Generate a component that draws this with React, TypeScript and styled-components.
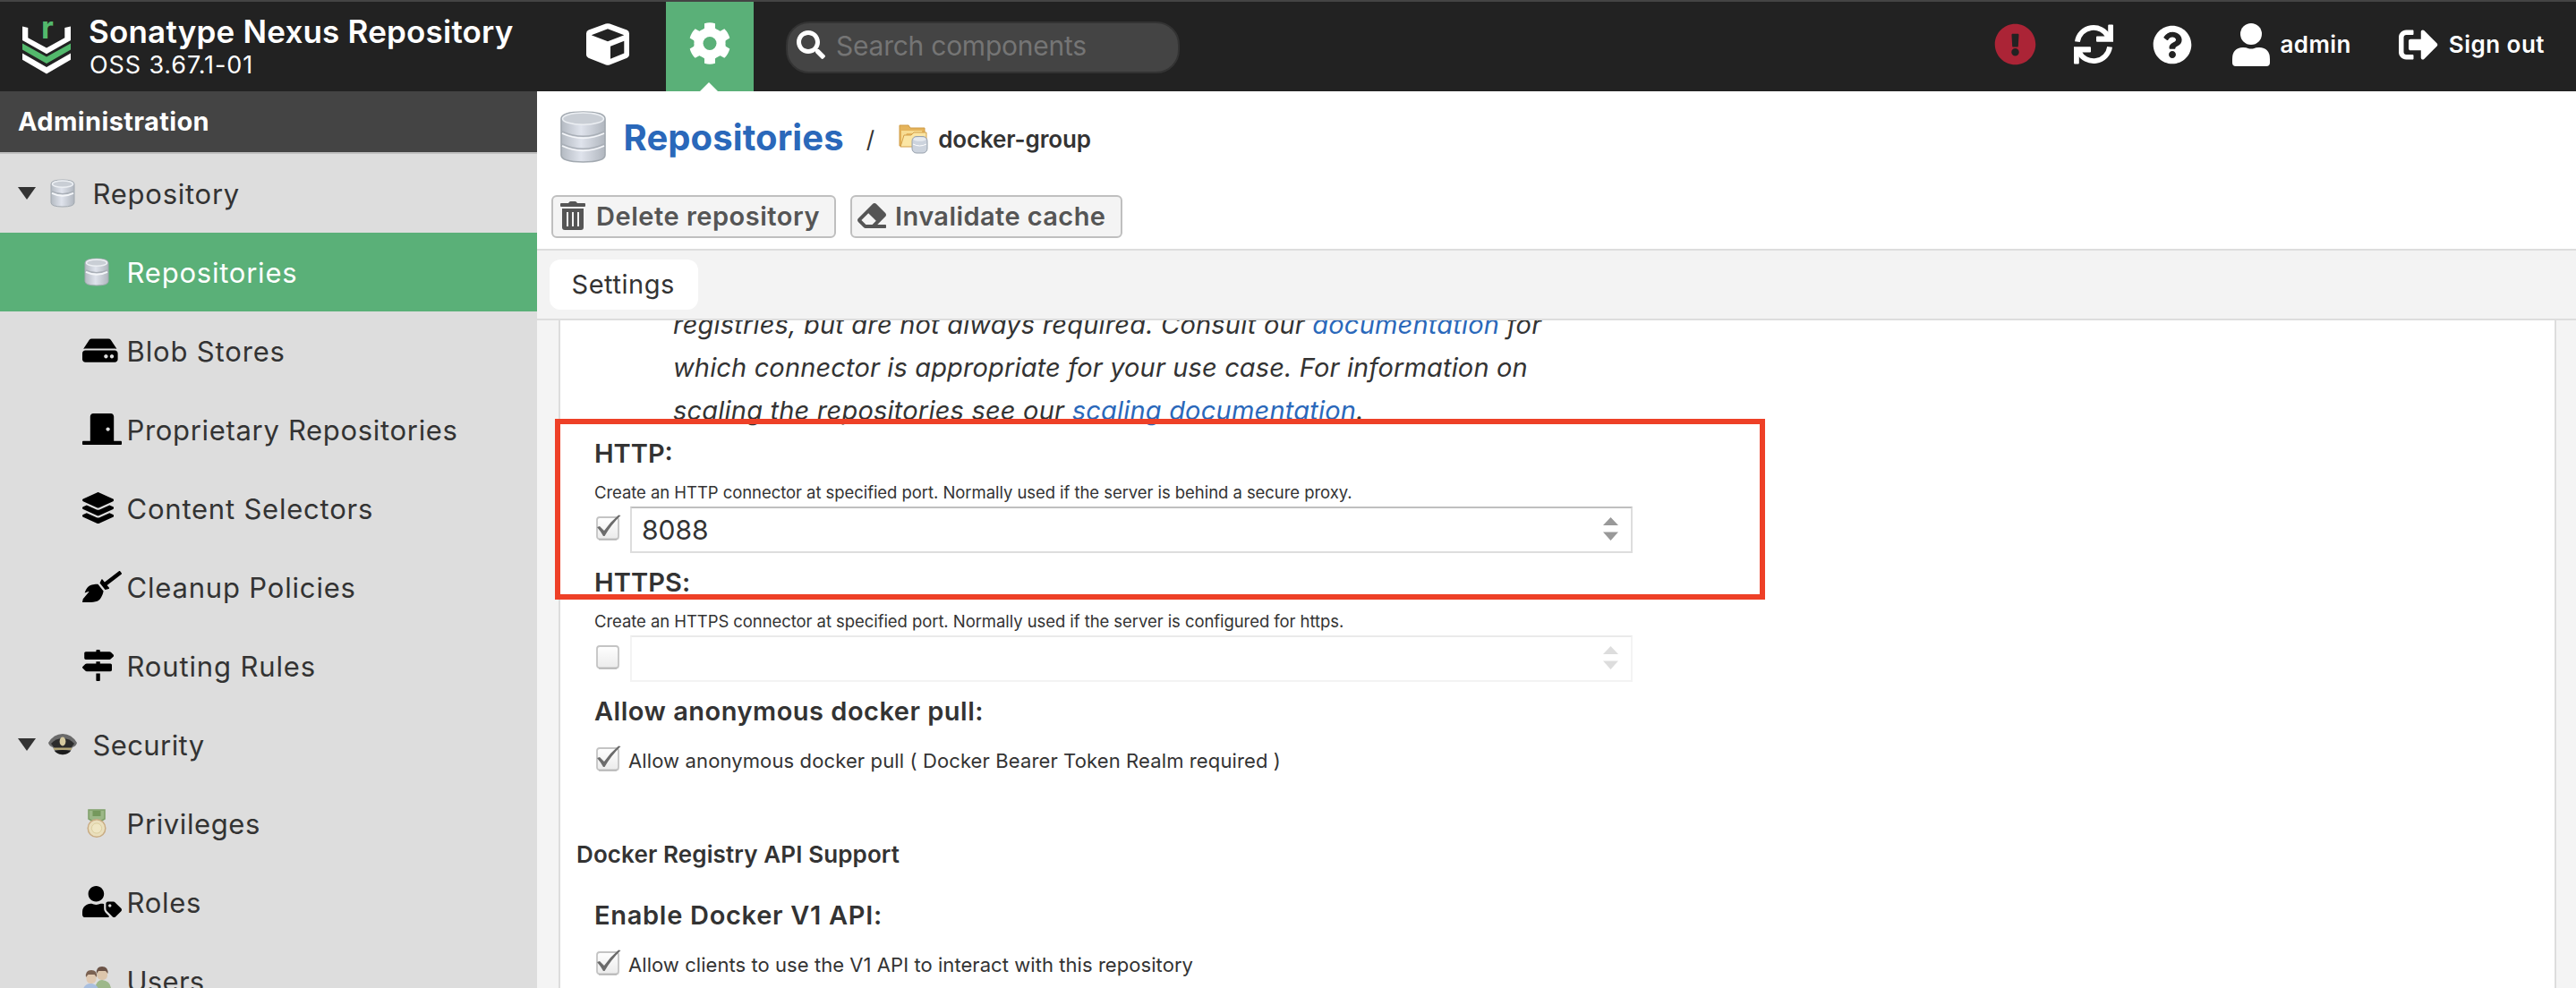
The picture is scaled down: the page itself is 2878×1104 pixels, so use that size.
import React from "react";
import styled, { createGlobalStyle } from "styled-components";
import {
  FaHdd, FaDoorClosed, FaLayerGroup, FaBroom, FaMapSigns, FaUserTag,
  FaQuestionCircle, FaExclamationCircle, FaSignOutAlt, FaSearch, FaEraser,
} from "react-icons/fa";

const GlobalStyle = createGlobalStyle`
  * { box-sizing: border-box; }
  body { margin: 0; background: #fff; color: #333; font-family: Inter, "Open Sans", sans-serif; }
  svg { display: block; flex: none; }
`;

/* One run of text: size, weight, tracking */
const Text = styled.span<{ $size: number; $weight?: number; $track?: number; $color?: string }>`
  display: block;
  white-space: pre;
  font-size: ${(p) => p.$size}px;
  font-weight: ${(p) => p.$weight ?? 400};
  letter-spacing: ${(p) => p.$track ?? 0}px;
  color: ${(p) => p.$color ?? "inherit"};
`;

const Page = styled.div`
  width: 2878px;
  height: 1104px;
  overflow: hidden;
  display: flex;
  flex-direction: column;
`;

/* ---------- header ---------- */
const Header = styled.header`
  flex: none;
  height: 102px;
  display: flex;
  background: #222;
  border-top: 2px solid #444;
  color: #fff;
`;
const Brand = styled.div`
  width: 630px;
  padding: 13px 0 0 25px;
  display: flex;
`;
const BrandLogo = styled.svg`
  width: 54px;
  height: 59px;
  margin: 9px 20px 0 0;
  overflow: visible;
`;
const BrandName = styled(Text)`line-height: 41px;`;
const BrandVersion = styled(Text)`line-height: 34px; padding-left: 1px;`;
const ModeTile = styled.div<{ $active?: boolean }>`
  position: relative;
  width: 98px;
  height: 100px;
  margin-right: 16px;
  display: flex;
  justify-content: center;
  padding-top: ${(p) => (p.$active ? 23 : 24)}px;
  background: ${(p) => (p.$active ? "#5ab078" : "transparent")};
`;
const Notch = styled.i`
  position: absolute;
  left: 38px;
  bottom: 0;
  border: 10px solid transparent;
  border-top: 0;
  border-bottom-color: #fff;
`;
const SearchBox = styled.div`
  width: 440px;
  height: 58px;
  margin: 22px 0 0 20px;
  padding: 0 10px 0 10px;
  display: flex;
  align-items: center;
  gap: 12px;
  border: 2px solid #333;
  border-radius: 26px;
  background: #444;
  svg { margin-bottom: 7px; }
  span { margin-bottom: 4px; }
`;
const Tools = styled.div`
  margin-left: auto;
  padding: 0 35px 5px 0;
  display: flex;
  align-items: center;
`;
const Tool = styled.div<{ $gap: number }>`
  display: flex;
  align-items: center;
  margin-left: ${(p) => p.$gap}px;
  gap: 12px;
`;

/* ---------- sidebar ---------- */
const Body = styled.div`flex: 1; min-height: 0; display: flex;`;
const Sidebar = styled.nav`
  width: 600px;
  flex: none;
  overflow: hidden;
  background: #ddd;
`;
const SidebarTitle = styled.div`
  height: 70px;
  padding: 0 0 1px 20px;
  display: flex;
  align-items: center;
  background: #444;
  border-bottom: 2px solid #bfbfbf;
  color: #fff;
`;
const NavRow = styled.div<{ $active?: boolean; $child?: boolean }>`
  height: 88px;
  padding: 0 0 0 ${(p) => (p.$child ? 92 : 20)}px;
  display: flex;
  align-items: center;
  background: ${(p) => (p.$active ? "#5ab078" : "transparent")};
  color: ${(p) => (p.$active ? "#fff" : "#333")};
`;
const Caret = styled.i`
  border: 10px solid transparent;
  border-top: 14px solid #333;
  border-bottom: 0;
  margin: 0 14px 1px 0;
`;
const NavIcon = styled.span<{ $glyph?: number }>`
  width: 49.5px;
  display: flex;
  color: #000;
  ${(p) => p.$glyph && `svg { width: ${p.$glyph}px; height: 35.2px; margin-top: -1px; }`}
`;

/* ---------- main ---------- */
const Main = styled.main`
  position: relative;
  flex: 1;
  min-width: 0;
  display: flex;
  flex-direction: column;
`;
const Crumbs = styled.div`
  height: 102px;
  padding-left: 26px;
  display: flex;
  align-items: center;
`;
const CrumbTitle = styled(Text)`margin-left: 19.5px;`;
const CrumbSep = styled(Text)`margin: 5px 27px 0 25px;`;
const CrumbLeaf = styled.div`
  display: flex;
  align-items: center;
  gap: 11px;
  margin-top: 5px;
`;
const Actions = styled.div`
  height: 76px;
  padding: 14px 0 0 16px;
  display: flex;
  gap: 16px;
  border-bottom: 2px solid #ddd;
`;
const Button = styled.button<{ $width: number; $pad: number; $gap: number }>`
  width: ${(p) => p.$width}px;
  height: 48px;
  padding: 0 0 2px ${(p) => p.$pad}px;
  display: flex;
  align-items: center;
  gap: ${(p) => p.$gap}px;
  border: 2px solid #bfbfbf;
  border-radius: 6px;
  background: #f4f4f4;
  color: #555;
  font-family: inherit;
`;
const Tabs = styled.div`
  height: 78px;
  padding: 10px 0 0 14px;
  background: #f3f3f3;
  border-bottom: 2px solid #ddd;
`;
const Tab = styled.div`
  width: 166px;
  height: 56px;
  padding: 0 0 1px 24.5px;
  display: flex;
  align-items: center;
  border-radius: 12px;
  background: #fff;
`;
const Scroller = styled.div`
  flex: 1;
  min-height: 0;
  overflow: hidden;
  padding: 0 22px 0 24px;
  background: #f4f4f4;
`;
const Panel = styled.section`
  height: 746px;
  padding-left: 37px;
  border-left: 2px solid #ddd;
  border-right: 2px solid #ddd;
  background: #fff;
  overflow: hidden;
`;
const Help = styled.div`
  height: 143px;
  margin-top: -19px;
  padding-left: 89px;
  font-style: italic;
`;
const HelpLine = styled(Text)`
  height: 48px;
  line-height: 48px;
  a { color: #2a68ba; }
`;
const Label = styled(Text)`
  height: 50px;
  line-height: 50px;
  padding-left: 1px;
`;
const Hint = styled(Text)`
  height: 34px;
  line-height: 34px;
  padding: 1px 0 0 1px;
`;
const PortRow = styled.div`
  display: flex;
  margin-bottom: 8px;
  padding-left: 2px;
  > svg { margin: 9px 9px 0 0; }
`;
const NumberField = styled.div<{ $disabled?: boolean }>`
  width: 1120px;
  height: 52px;
  padding: 0 14px 1px 11px;
  display: flex;
  align-items: center;
  justify-content: space-between;
  border: 2px solid #ddd;
  border-top-color: #bfbfbf;
  opacity: ${(p) => (p.$disabled ? 0.32 : 1)};
  svg { margin-bottom: 2px; }
`;
const CheckRow = styled.div`
  height: 60px;
  display: flex;
  padding-left: 2px;
  > svg { margin: 13px 7px 0 0; }
  > span { line-height: 60px; }
`;
const SectionTitle = styled(Text)`
  height: 60px;
  line-height: 60px;
  margin: 45px 0 13px -19px;
`;
const Highlight = styled.div`
  position: absolute;
  left: 20px;
  top: 366px;
  width: 1352px;
  height: 202px;
  border: 6px solid #ee4027;
`;

/* ---------- drawings ---------- */
const Logo = () => (
  <BrandLogo viewBox="0 0 54 58">
    <path fill="#fff" d="M0 5L6.3 6.5V17.7L27 29L47.3 17.7V6.5L54 5V20.5L27 35.7L0 20.5Z" />
    <path fill="#53b96c" d="M0 24L27 39L54 24V31L27 46.5L0 31Z" />
    <path fill="#fff" d="M0 35L27 50.5L54 35V42.3L27 58L0 42.3Z" />
    <text x="21" y="18.5" fill="#53b96c" fontFamily="Inter, sans-serif" fontWeight="700" fontSize="34">r</text>
  </BrandLogo>
);
const CubeIcon = () => (
  <svg width="48" height="47" viewBox="0 0 48 47">
    <path
      fill="#fff" fillRule="evenodd"
      d="M21.8 .6Q24 -.3 26.2 .6L45.4 7.6Q48 8.8 48 11.4V35.2Q48 37.6 45.6 38.7L26 46.4Q24 47.2 22 46.4L2.4 38.7Q0 37.6 0 35.2V11.4Q0 8.8 2.6 7.6ZM5.7 13.3L24 20.3L42.3 13.3L24 6.3ZM27 25.7V39.8L42.3 33.4V19.7Z"
    />
  </svg>
);
const GearIcon = () => (
  <svg width="46" height="47" viewBox="-23 -23.5 46 47" fill="#fff">
    <circle r="17.6" />
    {[0, 60, 120, 180, 240, 300].map((a) => (
      <path key={a} transform={`rotate(${a})`} d="M-6 -22.3Q0 -24 6 -22.3V-17Q7 -15 10 -13.5H-10Q-7 -15 -6 -17Z" />
    ))}
    <circle r="7.5" fill="#5ab078" />
  </svg>
);
const RefreshIcon = () => (
  <svg width="44" height="45" viewBox="0 0 44 44.6">
    {[0, 180].map((a) => (
      <g key={a} transform={`rotate(${a} 22 22.3)`}>
        <path fill="none" stroke="#fff" strokeWidth="5.8" d="M3.9 19.4A18.3 18.3 0 0 1 38.5 14" />
        <path fill="#fff" d="M43 .2Q44 .2 44 1.2V19.5H26Q25 19.5 25 18.5V14Q25 13.4 26 13.4H34.4L38.2 9.8V1.2Q38.2 .2 39.2 .2Z" />
      </g>
    ))}
  </svg>
);
const UserIcon = () => (
  <svg width="42" height="48" viewBox="0 0 42 48" fill="#fff">
    <circle cx="21" cy="12" r="12" />
    <path d="M12 27Q16 27 17.5 28Q21 29 24.5 28Q26 27 30 27Q42 27.5 42 40V44Q42 48 38 48H4Q0 48 0 44V40Q0 27.5 12 27Z" />
  </svg>
);
const TrashIcon = () => (
  <svg width="28" height="32" viewBox="0 0 28 32" fill="#555">
    <path d="M1 2H9L10 .7Q10.5 0 11.5 0H16.5Q17.5 0 18 .7L19 2H27Q28 2 28 3V5Q28 6 27 6H1Q0 6 0 5V3Q0 2 1 2Z" />
    <path fillRule="evenodd" d="M2 8H26V29Q26 32 23 32H5Q2 32 2 29ZM7 12V28H9V12ZM13 12V28H15V12ZM19 12V28H21V12Z" />
  </svg>
);

/* Stacked-disk cylinder; seams are the y positions of the joints */
const Disk = ({ w, h, seams }: { w: number; h: number; seams: number[] }) => {
  const id = `disk${w}`;
  const r = w * 0.13;
  return (
    <svg width={w} height={h} viewBox={`0 0 ${w} ${h}`}>
      <defs>
        <linearGradient id={id}>
          <stop offset="0" stopColor="#b4bac2" />
          <stop offset=".45" stopColor="#dfe3ec" />
          <stop offset="1" stopColor="#b0b6be" />
        </linearGradient>
      </defs>
      <path
        fill={`url(#${id})`} stroke="#a2a9b0" strokeWidth={w > 40 ? 1.6 : 1}
        d={`M1 ${r + 2}Q1 1 ${w / 2} 1Q${w - 1} 1 ${w - 1} ${r + 2}V${h - r - 2}Q${w - 1} ${h - 1} ${w / 2} ${h - 1}Q1 ${h - 1} 1 ${h - r - 2}Z`}
      />
      {seams.map((y) => (
        <g key={y} fill="none">
          <path stroke="#a9afb7" strokeWidth="1.5" d={`M2 ${y - r * 0.6}Q${w / 2} ${y + r} ${w - 2} ${y - r * 0.6}`} />
          <path stroke="#f4f6f9" strokeWidth="1.8" d={`M2 ${y - r * 0.6 + 2}Q${w / 2} ${y + r + 2} ${w - 2} ${y - r * 0.6 + 2}`} />
        </g>
      ))}
      <ellipse cx={w / 2} cy={r + 2} rx={w / 2 - 2.5} ry={r} fill="#c9ced5" stroke="#eceff3" strokeWidth="1.5" />
    </svg>
  );
};
const FolderIcon = () => (
  <svg width="33" height="33" viewBox="0 0 33 33">
    <path fill="#e5b45c" stroke="#cf9a43" d="M1 1H11L13 4H29V24H1Z" />
    <path fill="#f7dc92" d="M3 7H26V10H9L3 22Z" />
    <path fill="#fbe6a4" stroke="#d3a04a" d="M2 25L6 12H14L17 9H31V25Z" />
    <rect x="15" y="13.5" width="17" height="18.5" rx="5" fill="#ccd3dd" stroke="#98a1ac" />
    <ellipse cx="23.5" cy="16.5" rx="7" ry="2.3" fill="#e6eaef" />
    <path fill="none" stroke="#fff" d="M16 22Q23.5 26 31 22" />
  </svg>
);
const CapIcon = () => (
  <svg width="32" height="26" viewBox="0 0 32 26">
    <path fill="#6a6a6a" d="M0 11Q6 1 16 1Q26 1 32 11Q31 15 27 16Q24 24 16 24.5Q8 24 5 16Q1 15 0 11Z" />
    <path fill="#2c2c2c" d="M3 12Q8 6 16 6Q24 6 29 12L25 17H7Z" />
    <path fill="#1c1c1c" d="M7 20Q16 18 25 20Q22 24 16 24Q10 24 7 20Z" />
    <rect x="6" y="16.5" width="20" height="2.4" fill="#b5a878" />
    <ellipse cx="16" cy="9.5" rx="3.4" ry="5" fill="#d6caa0" />
  </svg>
);
const MedalIcon = () => (
  <svg width="32" height="33" viewBox="0 0 32 33">
    <path fill="#9cb787" stroke="#7d9f68" strokeWidth="1.5" d="M7 1H25V11L20 14H12L7 11Z" />
    <rect x="11.5" y="2" width="9" height="6" fill="#75985c" />
    <circle cx="16" cy="21.5" r="9.8" fill="#eadfbd" stroke="#c9ac83" strokeWidth="1.5" />
    <circle cx="16" cy="21.5" r="5.6" fill="#efe6c4" stroke="#dccf9f" />
  </svg>
);
const UsersIcon = () => (
  <svg width="32" height="32" viewBox="0 0 32 32">
    <path fill="#9db88a" d="M14 24Q16 15 22 15Q31 16 32 24V32H14Z" />
    <rect x="16.5" y="1" width="11.5" height="14" rx="5" fill="#dcc5ab" />
    <path fill="#6b5346" d="M16 8Q15 0 22 0Q29 0 28.5 8L26 5H18Z" />
    <path fill="#a9bfdf" d="M0 28Q2 19 9 19Q17 19 19 28V32H0Z" />
    <rect x="4.5" y="5" width="11" height="14" rx="5" fill="#e0c9b1" />
    <path fill="#7b6252" d="M4 12Q3 4 10 4Q17 4 16 12L13.5 9H6.5Z" />
  </svg>
);
const Check = ({ on = false }: { on?: boolean }) => (
  <svg width="30" height="30" viewBox="0 0 30 30">
    <defs>
      <linearGradient id="box" x2="0" y2="1">
        <stop offset="0" stopColor="#fff" />
        <stop offset="1" stopColor="#ebebeb" />
      </linearGradient>
    </defs>
    <rect x="2" y="3" width="24" height="24.5" rx="3" fill="url(#box)" stroke="#c4c4c4" strokeWidth="1.8" />
    <path stroke="#b5b5b5" strokeWidth="1.5" d="M4 27.8H24" />
    {on && <path fill="#6c6c6c" d="M2 14L5 13L10 18Q17 8 26 0.500L28.500 1Q18 11 10.500 24H9Q6 18.500 2 14Z" />}
  </svg>
);
const Spinner = () => (
  <svg width="17" height="26" viewBox="0 0 17 26" fill="#999">
    <path d="M8.5 0L17 9H0ZM0 16.5H17L8.5 26Z" />
  </svg>
);

const smallDisk = <Disk w={28} h={32} seams={[16]} />;
const nav = [
  { label: "Blob Stores", track: 0.85, glyph: 39.6, icon: <FaHdd /> },
  { label: "Proprietary Repositories", track: 0.68, glyph: 44, icon: <FaDoorClosed /> },
  { label: "Content Selectors", track: 0.78, glyph: 35.2, icon: <FaLayerGroup /> },
  { label: "Cleanup Policies", track: 0.82, glyph: 44, icon: <FaBroom /> },
  { label: "Routing Rules", track: 0.85, glyph: 35.2, icon: <FaMapSigns /> },
  { label: "Security", track: 0.4, icon: <CapIcon />, group: true },
  { label: "Privileges", track: 0.6, icon: <MedalIcon /> },
  { label: "Roles", track: 0.7, glyph: 44, icon: <FaUserTag /> },
  { label: "Users", track: 0.3, icon: <UsersIcon /> },
];
const DiskSlot = styled.span`display: block; padding: 0 0 0 2px;`;

export default function App() {
  return (
    <Page>
      <GlobalStyle />
      <Header>
        <Brand>
          <Logo />
          <div>
            <BrandName $size={35} $weight={600} $track={0.2}>Sonatype Nexus Repository</BrandName>
            <BrandVersion $size={27} $track={0.88}>OSS 3.67.1-01</BrandVersion>
          </div>
        </Brand>
        <ModeTile><CubeIcon /></ModeTile>
        <ModeTile $active><GearIcon /><Notch /></ModeTile>
        <SearchBox>
          <FaSearch size={32} />
          <Text $size={30} $track={-0.25} $color="#757575">Search components</Text>
        </SearchBox>
        <Tools>
          <Tool $gap={0}><FaExclamationCircle size={47} color="#ab2436" /></Tool>
          <Tool $gap={42}><RefreshIcon /></Tool>
          <Tool $gap={44}><FaQuestionCircle size={44} /></Tool>
          <Tool $gap={45}><UserIcon /><Text $size={26} $weight={600} $track={0.4}>admin</Text></Tool>
          <Tool $gap={53}><FaSignOutAlt size={44} /><Text $size={26} $weight={600} $track={0.48}>Sign out</Text></Tool>
        </Tools>
      </Header>
      <Body>
        <Sidebar>
          <SidebarTitle><Text $size={29} $weight={700} $track={0.36}>Administration</Text></SidebarTitle>
          <NavRow>
            <Caret />
            <NavIcon><DiskSlot>{smallDisk}</DiskSlot></NavIcon>
            <Text $size={31} $track={0.75}>Repository</Text>
          </NavRow>
          <NavRow $child $active>
            <NavIcon><DiskSlot>{smallDisk}</DiskSlot></NavIcon>
            <Text $size={31} $track={0.78}>Repositories</Text>
          </NavRow>
          {nav.map((n) => (
            <NavRow key={n.label} $child={!n.group}>
              {n.group && <Caret />}
              <NavIcon $glyph={n.glyph}>{n.icon}</NavIcon>
              <Text $size={31} $track={n.track}>{n.label}</Text>
            </NavRow>
          ))}
        </Sidebar>
        <Main>
          <Crumbs>
            <Disk w={51} h={58} seams={[27, 41]} />
            <CrumbTitle $size={40} $weight={700} $track={0.1} $color="#2a68ba">Repositories</CrumbTitle>
            <CrumbSep $size={26}>/</CrumbSep>
            <CrumbLeaf>
              <FolderIcon />
              <Text $size={26} $weight={600} $track={-0.12}>docker-group</Text>
            </CrumbLeaf>
          </Crumbs>
          <Actions>
            <Button $width={318} $pad={8} $gap={12}>
              <TrashIcon />
              <Text $size={29} $weight={600} $track={0.52}>Delete repository</Text>
            </Button>
            <Button $width={304} $pad={6} $gap={10}>
              <FaEraser size={32} />
              <Text $size={29} $weight={600} $track={0.42}>Invalidate cache</Text>
            </Button>
          </Actions>
          <Tabs><Tab><Text $size={29} $track={0.55}>Settings</Text></Tab></Tabs>
          <Scroller>
            <Panel>
              <Help>
                <HelpLine $size={29} $track={0.19}>registries, but are not always required. Consult our <a>documentation</a> for</HelpLine>
                <HelpLine $size={29} $track={0.14}>which connector is appropriate for your use case. For information on</HelpLine>
                <HelpLine $size={29} $track={0.21}>scaling the repositories see our <a>scaling documentation</a>.</HelpLine>
              </Help>
              <Label $size={29} $weight={600} $track={0}>HTTP:</Label>
              <Hint $size={18.5} $track={-0.06}>Create an HTTP connector at specified port. Normally used if the server is behind a secure proxy.</Hint>
              <PortRow>
                <Check on />
                <NumberField><Text $size={30} $track={0}>8088</Text><Spinner /></NumberField>
              </PortRow>
              <Label $size={29} $weight={600} $track={0.1}>HTTPS:</Label>
              <Hint $size={18.5} $track={-0.07}>Create an HTTPS connector at specified port. Normally used if the server is configured for https.</Hint>
              <PortRow>
                <Check />
                <NumberField $disabled><span /><Spinner /></NumberField>
              </PortRow>
              <Label $size={29} $weight={600} $track={0.5}>Allow anonymous docker pull:</Label>
              <CheckRow>
                <Check on />
                <Text $size={22} $track={0.12}>Allow anonymous docker pull ( Docker Bearer Token Realm required )</Text>
              </CheckRow>
              <SectionTitle $size={26} $weight={600} $track={0.12}>Docker Registry API Support</SectionTitle>
              <Label $size={29} $weight={600} $track={0.7}>Enable Docker V1 API:</Label>
              <CheckRow>
                <Check on />
                <Text $size={22} $track={0.06}>Allow clients to use the V1 API to interact with this repository</Text>
              </CheckRow>
            </Panel>
          </Scroller>
          <Highlight />
        </Main>
      </Body>
    </Page>
  );
}
